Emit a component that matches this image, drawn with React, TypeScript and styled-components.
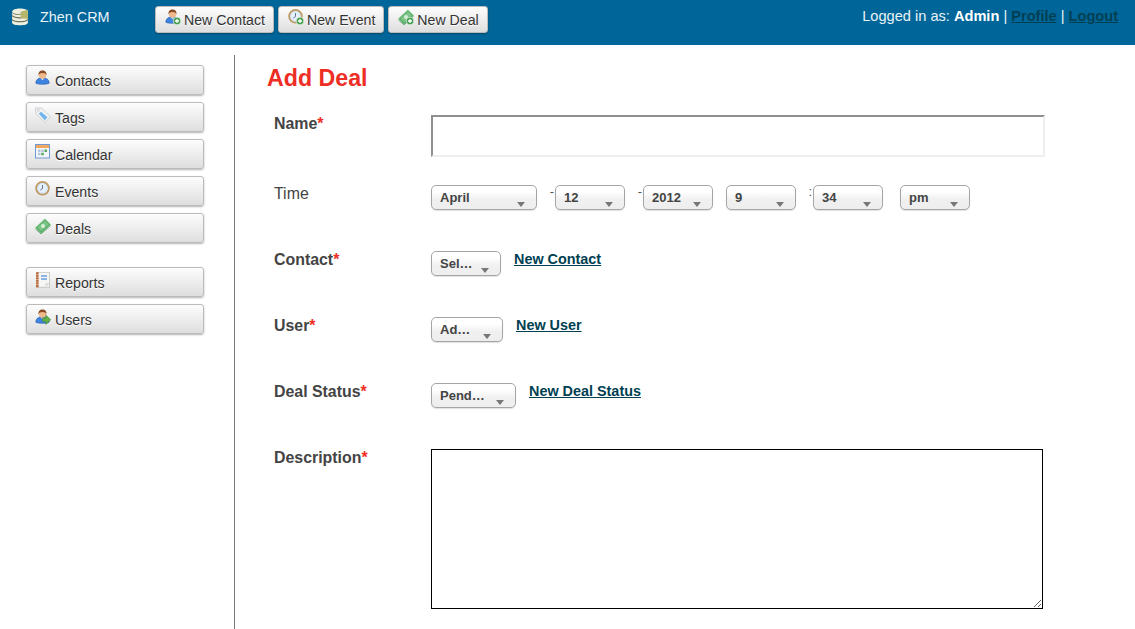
import { ReactNode } from "react";
import styled, { createGlobalStyle } from "styled-components";

const GlobalStyle = createGlobalStyle`
  html, body {
    margin: 0;
    padding: 0;
    height: 100%;
    overflow: hidden;
    background: #fff;
    font-family: "Liberation Sans", Arial, sans-serif;
    color: #444;
  }
`;

const Page = styled.div`
  display: flex;
  flex-direction: column;
  height: 629px;
  overflow: hidden;
`;

const Header = styled.header`
  flex: none;
  display: flex;
  align-items: flex-start;
  height: 45px;
  background: #006699;
  box-sizing: border-box;
`;

const Brand = styled.div`
  display: flex;
  align-items: flex-start;
  width: 155px;
  padding: 8px 0 0 11px;
  box-sizing: border-box;
  font-size: 14.4px;
  line-height: 18px;
  color: #e8f2f7;
`;

const BrandName = styled.span`
  margin-left: 11px;
`;

const QuickActions = styled.div`
  display: flex;
  gap: 4px;
  padding-top: 6px;
`;

const Button = styled.a`
  display: flex;
  align-items: flex-start;
  box-sizing: border-box;
  border: 1px solid #bbb;
  border-radius: 3px;
  background: linear-gradient(#fdfdfd, #dedede);
  box-shadow: 0 1px 2px rgba(0, 0, 0, 0.3);
  color: #333;
  font-size: 14.15px;
  text-shadow: 0 1px 0 #fff;
  cursor: pointer;
`;

const HeaderButton = styled(Button)`
  height: 27px;
  padding: 2px 8px 0 9px;
  line-height: 23px;
  svg {
    margin-right: 3px;
  }
`;

const Session = styled.div`
  margin-left: auto;
  padding: 8px 17px 0 0;
  font-size: 14.6px;
  line-height: 16px;
  color: #e8f2f7;
  b {
    color: #fff;
  }
`;

const SessionLink = styled.a`
  color: #003f52;
  font-weight: bold;
  text-decoration: underline;
`;

const Body = styled.div`
  flex: 1;
  display: flex;
  min-height: 0;
  padding-top: 10px;
`;

const Sidebar = styled.nav`
  flex: none;
  box-sizing: border-box;
  width: 235px;
  padding: 10px 30px 0 26px;
  border-right: 1px solid #777;
`;

const NavGroup = styled.div`
  display: flex;
  flex-direction: column;
  gap: 7px;
  margin-bottom: 24px;
`;

const NavButton = styled(Button)`
  height: 30px;
  padding: 4px 0 0 8px;
  line-height: 22px;
  svg {
    margin-right: 4px;
  }
`;

const Main = styled.main`
  flex: 1;
  padding: 0 0 0 32px;
`;

const Title = styled.h1`
  margin: 9px 0 23px;
  font-size: 23.2px;
  line-height: 28px;
  font-weight: bold;
  color: #ee2e24;
`;

const FormRow = styled.div<{ $height: number }>`
  display: grid;
  grid-template-columns: 157px 1fr;
  height: ${(p) => p.$height}px;
  padding-left: 7px;
`;

const Label = styled.label<{ $plain?: boolean }>`
  font-size: 15.9px;
  line-height: 18px;
  font-weight: ${(p) => (p.$plain ? "normal" : "bold")};
  color: #444;
`;

const Star = styled.span`
  color: #ee2e24;
`;

const TextInput = styled.input`
  display: block;
  box-sizing: border-box;
  width: 614px;
  height: 42px;
  padding: 0;
  border: 2px solid;
  border-color: #8f8f8f #eeeeee #eeeeee #8f8f8f;
  background: #fff;
  outline: none;
`;

const Controls = styled.div`
  display: flex;
  align-items: flex-start;
`;

const Select = styled.div<{ $width: number }>`
  position: relative;
  flex: none;
  box-sizing: border-box;
  width: ${(p) => p.$width}px;
  height: 25px;
  padding-left: 8px;
  border: 1px solid #a5a5a5;
  border-radius: 5px;
  background: linear-gradient(#ffffff 25%, #f0f0f0 60%, #eeeeee);
  box-shadow: 0 1px 1px rgba(0, 0, 0, 0.12);
  font-size: 13px;
  font-weight: bold;
  line-height: 23px;
  color: #444;

  &::after {
    content: "";
    position: absolute;
    right: 11px;
    top: 16px;
    border-style: solid;
    border-width: 5px 4.5px 0;
    border-color: #777 transparent transparent;
  }
`;

const Separator = styled.span<{ $width: number }>`
  flex: none;
  width: ${(p) => p.$width}px;
  padding-right: 1px;
  box-sizing: border-box;
  text-align: right;
  font-size: 13px;
  line-height: 13px;
  color: #555;
`;

const AddLink = styled.a`
  margin-left: 13px;
  font-size: 14.4px;
  font-weight: bold;
  line-height: 16px;
  color: #003f52;
  text-decoration: underline;
  cursor: pointer;
`;

const TextArea = styled.textarea`
  display: block;
  box-sizing: border-box;
  width: 612px;
  height: 160px;
  margin: 0;
  padding: 2px;
  border: 1px solid #000;
  border-radius: 0;
  outline: none;
`;

const Plus = () => (
  <g>
    <circle cx="12" cy="12" r="3.800" fill="#3d9a48" stroke="#e8f3e8" strokeWidth="0.700" />
    <path d="M12 9.900v4.200M9.900 12h4.200" stroke="#fff" strokeWidth="1.300" />
  </g>
);

const Person = () => (
  <g>
    <path d="M0.800 13.200c0-3.600 2.800-5.400 6.700-5.400s6.700 1.800 6.700 5.400c-1.800 1.500-11.600 1.500-13.400 0z" fill="#3f83e0" stroke="#2a5da8" strokeWidth="0.600" />
    <path d="M5.600 8.200l1.900 2 1.900-2z" fill="#d8e8fa" />
    <circle cx="7.500" cy="5" r="3.700" fill="#efb98c" />
    <path d="M3.600 5.600C3 2 5 .4 7.500 .4S12 2 11.400 5.600c-.5-1.800-1.600-2.500-3.900-2.500s-3.400.7-3.900 2.500z" fill="#8a4a24" />
  </g>
);

const Clock = () => (
  <g>
    <circle cx="7.500" cy="7.300" r="6.400" fill="#cfe2f6" stroke="#bf9a62" strokeWidth="1.700" />
    <circle cx="7.500" cy="7.300" r="4.500" fill="#e4f0fb" />
    <path d="M7.500 4v3.600L5.300 9" fill="none" stroke="#5a6a80" strokeWidth="0.900" />
  </g>
);

const Money = () => (
  <g>
    <path d="M0.300 9.800L10 .8l5.700 5.700-9.600 9z" fill="#58ad66" stroke="#a5d8a8" strokeWidth="0.600" />
    <path d="M2.300 9.500L10 2.500l3.800 3.800-7.700 7z" fill="#7cc487" />
    <circle cx="8" cy="7.900" r="2" fill="#d7f0d8" />
    <path d="M0.500 11l5.600 4.800 9.500-8.300" fill="none" stroke="#3f8a4c" strokeWidth="0.700" />
  </g>
);

const icons: Record<string, ReactNode> = {
  newContact: (<><Person /><Plus /></>),
  newEvent: (<><Clock /><Plus /></>),
  newDeal: (<><Money /><Plus /></>),
  contact: <Person />,
  tag: (
    <g>
      <path d="M0.500 .8l6.300 .4 8.700 8.600-5.600 5.600L.9 7z" fill="#f1f2f3" stroke="#c6cacd" strokeWidth="0.800" />
      <path d="M6 4.800l6.500 5.500-2.700 2.900-6-6.500z" fill="#72b4ee" />
      <circle cx="3.300" cy="3.400" r="1" fill="#fff" stroke="#aab" strokeWidth="0.500" />
    </g>
  ),
  calendar: (
    <g>
      <rect x="0.500" y="0.500" width="14" height="13.500" fill="#f3f7fc" stroke="#6f9ad3" />
      <rect x="1" y="1" width="13" height="3" fill="#f3a860" />
      <path d="M3 5.500h2.500V8H3zM6.300 5.500h2.500V8H6.300zM3 8.800h2.500v2.500H3z" fill="#b5c7dc" />
      <path d="M9.500 5.500H12V8H9.500zM6.300 8.800h2.500v2.500H6.300z" fill="#56a85a" />
    </g>
  ),
  clock: <Clock />,
  money: <Money />,
  report: (
    <g>
      <rect x="2" y="0.300" width="12.500" height="15" fill="#f6f6f4" stroke="#c9c9c5" />
      <rect x="1" y="0.300" width="2.600" height="15" fill="#b5683a" />
      <path d="M1 2.500h2.600M1 5h2.600M1 7.500h2.600M1 10h2.600M1 12.500h2.600" stroke="#f0d8c0" strokeWidth="0.600" />
      <path d="M6 4h6M6 7h6" stroke="#6c9fe2" strokeWidth="1.400" />
      <path d="M10.500 15.300l4-4h-4z" fill="#d8d8d4" />
    </g>
  ),
  users: (
    <g>
      <Person />
      <path d="M7.500 8.800h3.300V6l5 4.700-5 4.700v-2.800H7.500z" fill="#62b048" stroke="#3f7f2e" strokeWidth="0.500" />
    </g>
  ),
  logo: (
    <g>
      <path d="M1 3.500c0-4 14-4 14 0v9.500c0 3-14 3-14 0z" fill="#f0f0e2" />
      <path d="M1 6.800c2.500 2.500 11.500 2.500 14 0M1 10.300c2.500 2.500 11.500 2.500 14 0" fill="none" stroke="#75755a" strokeWidth="1.100" />
      <path d="M8.500 3.300L15 1.500v8.300l-6.500-.9z" fill="#b5b56d" />
      <path d="M1 4c2 2 5 2 7.500 1.600" fill="none" stroke="#75755a" strokeWidth="0.800" />
    </g>
  ),
};

const IconSvg = styled.svg`
  flex: none;
  display: block;
`;

const Icon = ({ name, size = 16 }: { name: string; size?: number }) => (
  <IconSvg width={size} height={size} viewBox="0 0 16 16">
    {icons[name]}
  </IconSvg>
);

const primaryNav = [
  { label: "Contacts", icon: "contact" },
  { label: "Tags", icon: "tag" },
  { label: "Calendar", icon: "calendar" },
  { label: "Events", icon: "clock" },
  { label: "Deals", icon: "money" },
];

const secondaryNav = [
  { label: "Reports", icon: "report" },
  { label: "Users", icon: "users" },
];

const quickActions = [
  { label: "New Contact", icon: "newContact" },
  { label: "New Event", icon: "newEvent" },
  { label: "New Deal", icon: "newDeal" },
];

export default function App() {
  return (
    <Page>
      <GlobalStyle />
      <Header>
        <Brand>
          <Icon name="logo" size={18} />
          <BrandName>Zhen CRM</BrandName>
        </Brand>
        <QuickActions>
          {quickActions.map((a) => (
            <HeaderButton key={a.label}>
              <Icon name={a.icon} />
              {a.label}
            </HeaderButton>
          ))}
        </QuickActions>
        <Session>
          Logged in as: <b>Admin</b> | <SessionLink>Profile</SessionLink> | <SessionLink>Logout</SessionLink>
        </Session>
      </Header>
      <Body>
        <Sidebar>
          <NavGroup>
            {primaryNav.map((n) => (
              <NavButton key={n.label}>
                <Icon name={n.icon} />
                {n.label}
              </NavButton>
            ))}
          </NavGroup>
          <NavGroup>
            {secondaryNav.map((n) => (
              <NavButton key={n.label}>
                <Icon name={n.icon} />
                {n.label}
              </NavButton>
            ))}
          </NavGroup>
        </Sidebar>
        <Main>
          <Title>Add Deal</Title>
          <FormRow $height={70}>
            <Label>Name<Star>*</Star></Label>
            <TextInput />
          </FormRow>
          <FormRow $height={66}>
            <Label $plain>Time</Label>
            <Controls>
              <Select $width={106}>April</Select>
              <Separator $width={18}>-</Separator>
              <Select $width={70}>12</Select>
              <Separator $width={18}>-</Separator>
              <Select $width={70}>2012</Select>
              <Separator $width={13} />
              <Select $width={70}>9</Select>
              <Separator $width={17}>:</Separator>
              <Select $width={70}>34</Select>
              <Separator $width={17} />
              <Select $width={70}>pm</Select>
            </Controls>
          </FormRow>
          <FormRow $height={66}>
            <Label>Contact<Star>*</Star></Label>
            <Controls>
              <Select $width={70}>Sel…</Select>
              <AddLink>New Contact</AddLink>
            </Controls>
          </FormRow>
          <FormRow $height={66}>
            <Label>User<Star>*</Star></Label>
            <Controls>
              <Select $width={72}>Ad…</Select>
              <AddLink>New User</AddLink>
            </Controls>
          </FormRow>
          <FormRow $height={66}>
            <Label>Deal Status<Star>*</Star></Label>
            <Controls>
              <Select $width={85}>Pend…</Select>
              <AddLink>New Deal Status</AddLink>
            </Controls>
          </FormRow>
          <FormRow $height={160}>
            <Label>Description<Star>*</Star></Label>
            <TextArea />
          </FormRow>
        </Main>
      </Body>
    </Page>
  );
}
